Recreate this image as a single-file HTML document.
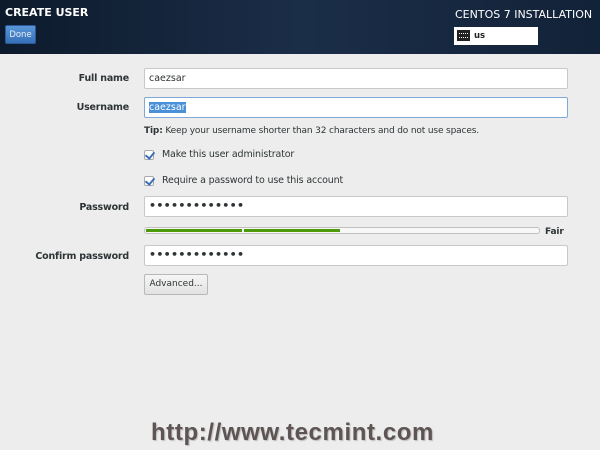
<!DOCTYPE html>
<html><head><style>
*{margin:0;padding:0;box-sizing:border-box}
body{width:600px;height:450px;overflow:hidden;background:#ededed;font-family:"DejaVu Sans","Liberation Sans",sans-serif;position:relative;color:#2e3436}
.hdr{position:absolute;left:0;top:0;width:600px;height:54px;background:linear-gradient(90deg,#0d1a2c,#1b2e48 50%,#122238);}
.ab{position:absolute;white-space:nowrap}
.lbl{position:absolute;font-size:9.5px;font-weight:bold;text-align:right;width:129px;left:0;letter-spacing:-0.2px}
.inp{position:absolute;left:144px;width:424px;height:21px;background:#fff;border:1px solid #c8c8c8;border-radius:2px;font-size:9.5px;padding:4px 4px}
.dots{letter-spacing:0.3px;font-size:11px;padding-top:2px;font-weight:bold}
.cb{position:absolute;left:144px;width:10px;height:10px;background:#fff;border:1px solid #aaa;border-radius:2px}
.cb:after{content:"";position:absolute;left:2px;top:-1px;width:4px;height:7px;border:solid #3c6fb4;border-width:0 2px 2px 0;transform:rotate(40deg)}
.t{position:absolute;font-size:9.5px;white-space:nowrap;letter-spacing:-0.15px}
</style></head><body>
<div class="hdr"></div>
<div class="ab" style="left:5px;top:6px;color:#fff;font-weight:bold;font-size:11px">CREATE USER</div>
<div class="ab" style="left:5px;top:25px;width:31px;height:19px;background:linear-gradient(#5a95d8,#3570b8);border:1px solid #2a5a98;border-radius:2px;color:#e8eef6;font-size:8.5px;text-align:center;line-height:19px">Done</div>
<div class="ab" style="left:455px;top:8px;color:#fff;font-size:11px">CENTOS 7 INSTALLATION</div>
<div class="ab" style="left:454px;top:27px;width:84px;height:18px;background:#fff"></div>
<div class="ab" style="left:457px;top:30px;width:13px;height:11px;background:#222;border:1px solid #222"><div style="margin:2px 1px;height:5px;border-top:1px dotted #fff;border-bottom:1px dotted #fff"></div></div>
<div class="ab" style="left:474px;top:31px;font-size:8.5px;font-weight:bold;color:#222">us</div>

<div class="lbl" style="top:73px">Full name</div>
<div class="inp" style="top:68px">caezsar</div>
<div class="lbl" style="top:102px">Username</div>
<div class="inp" style="top:97px;border-color:#7fa8d8"><span style="background:#4a90d9;color:#fff">caezsar</span></div>
<div class="t" style="left:144px;top:126px;font-size:9px"><b>Tip:</b> Keep your username shorter than 32 characters and do not use spaces.</div>
<div class="cb" style="top:150px"></div>
<div class="t" style="left:162px;top:149px">Make this user administrator</div>
<div class="cb" style="top:176px"></div>
<div class="t" style="left:162px;top:175px">Require a password to use this account</div>
<div class="lbl" style="top:202px">Password</div>
<div class="inp dots" style="top:196px">•••••••••••••</div>
<div class="ab" style="left:144px;top:227px;width:396px;height:7px;background:#f8f8f8;border:1px solid #c0c0c0;border-radius:3px"></div>
<div class="ab" style="left:146px;top:229px;width:96px;height:3px;background:#4e9a06"></div>
<div class="ab" style="left:244px;top:229px;width:96px;height:3px;background:#4e9a06"></div>
<div class="t" style="left:545px;top:227px;font-weight:bold;font-size:9px">Fair</div>
<div class="lbl" style="top:251px">Confirm password</div>
<div class="inp dots" style="top:245px">•••••••••••••</div>
<div class="ab" style="left:144px;top:274px;width:64px;height:21px;background:linear-gradient(#f6f6f6,#e2e2e2);border:1px solid #b8b8b8;border-radius:2px;font-size:9px;text-align:center;line-height:19px">Advanced...</div>
<div class="ab" style="left:151px;top:419px;font-family:'Liberation Sans',sans-serif;font-weight:bold;font-size:24px;color:#5e5454;text-shadow:1px 1px 1px #bbb;letter-spacing:0.6px">http://www.tecmint.com</div>
</body></html>
